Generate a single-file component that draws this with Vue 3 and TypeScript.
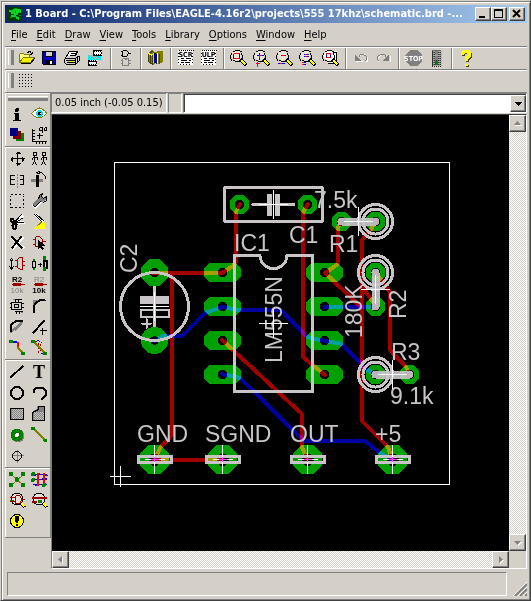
<script setup lang="ts">
import { h, type FunctionalComponent } from 'vue'

interface Shape {
  kind: 'line' | 'fill' | 'text'
  d: string
  color: string
  width?: number
  x?: number
  y?: number
  size?: number
  family?: string
  weight?: number
}
interface Tool {
  name: string
  art: Shape[]
  disabled?: boolean
}

const K = '#000000'
const G = '#808080'
const R = '#990000'
const GR = '#008000'
const OL = '#808000'
const Y = '#ffff00'
const W = '#ffffff'
const N = '#000080'

const L = (d: string, color = K, width = 1): Shape => ({ kind: 'line', d, color, width })
const F = (d: string, color = K): Shape => ({ kind: 'fill', d, color })
const T = (d: string, x: number, y: number, size: number, color = K, family = 'Liberation Sans', weight = 700): Shape =>
  ({ kind: 'text', d, x, y, size, color, family, weight })
const disc = (x: number, y: number, r: number): string =>
  `M${x - r} ${y}a${r} ${r} 0 1 0 ${2 * r} 0a${r} ${r} 0 1 0 ${-2 * r} 0z`

const Glyph: FunctionalComponent<{ art: Shape[]; w: number }> = (props) =>
  h(
    'svg',
    { width: props.w, height: 21, viewBox: `0 0 ${props.w} 21`, 'shape-rendering': 'crispEdges', 'aria-hidden': 'true' },
    props.art.map((s) =>
      s.kind === 'text'
        ? h('text', { x: s.x, y: s.y, 'font-size': s.size, 'font-family': s.family, 'font-weight': s.weight, fill: s.color, 'text-anchor': 'middle' }, s.d)
        : s.kind === 'line'
          ? h('path', { d: s.d, fill: 'none', stroke: s.color, 'stroke-width': s.width, transform: 'translate(.5 .5)' })
          : h('path', { d: s.d, fill: s.color }),
    ),
  )
Glyph.props = ['art', 'w']

const lens = (fill = '#e8e4dc'): Shape[] => [
  F(disc(9.5, 7.5, 5), fill),
  L('M7 2H12M5 3H7M12 3H14M4 4V6M14 4V6M3 6V10M15 6V10M4 10V12M14 10V12M5 12H7M12 12H14M7 13H12'),
  L('M13 11L19 17', K, 4),
  L('M14 12L18 16', Y, 2),
]
const script = (label: string): Shape[] => [
  F('M4 2H19V17H4z', W),
  L('M4 2h1M6 2h1M8 2h1M10 2h1M12 2h1M14 2h1M16 2h1M18 2h1M4 4v1M4 7v1M4 10v1M4 13v1M18 4v1M18 7v1M18 10v1M18 13v1M5 16h1M8 16h1M11 16h1M14 16h1'),
  T(label, 11.5, 9, 7, K, 'DejaVu Sans Condensed', 700),
  L('M6 10h3M11 10h5M6 12h6M14 12h2M6 14h3M10 14h5'),
]

const topGroups: Tool[][] = [
  [
    { name: 'Open', art: [
      F('M4 15V7L6 5H9L10 7H15V10H19L16 15z', '#ffff80'),
      L('M4 14V6L5 5H8L9 6H14V9M4 14L8 9H19L15 14H4', OL),
      L('M5 15H15L19 10M12 4L14 3L16 4M15 6L17 5V3'),
      F('M8 10H18L15 14H6z', '#f8f000'),
    ] },
    { name: 'Save', art: [F('M4 3H18V17H5L4 16z'), F('M5 4H7V9H15V4H17V16H15V12H7V16H5z', '#0000c8'), F('M8 4H14V8H8z', '#d4d0c8'), F('M12 13H14V16H12z', W)] },
    { name: 'Print', art: [
      F('M8 3H17L14 9H5z', W), L('M8 3H16L13 9M8 3L5 8M9 5H14M8 7H13'),
      F('M3 10L6 8H15L19 7V12L15 16H4L3 14z', '#d4d0c8'),
      L('M3 10L5 8M3 10H14L18 7M3 10V14L5 16H14L18 12V7M14 10V16M4 12H14M16 9V14M5 14H13'),
      F('M9 13H12V14H9z', Y),
    ] },
    { name: 'CAM processor', art: [
      F('M4 7H14V11H9V13H4z', '#00f0f0'), F('M9 8H17V12H9z', '#00e8f0'), L('M6 7L12 11M9 7L15 11', '#e8a090'),
      F('M9 2H18V8H9z'), F('M10 4H17V6H10z', W), L('M10 3h1M12 3h1M14 3h1M16 3h1M10 6h1M12 6h1M14 6h1M16 6h1', W),
      F('M4 12H13V18H4z'), F('M5 14H12V16H5z', W), L('M5 12h1M7 12h1M9 12h1M11 12h1M5 16h1M7 16h1M9 16h1M11 16h1', W),
    ] },
  ],
  [{ name: 'Switch to schematic', art: [
    L('M8 2H12L14 4V5L12 8H8V2M6 3H8M6 7H8M14 5H16'),
    L('M8 10H14V17H8V10M6 12H8M6 15H8M14 12H16M14 15H16M10 11H12', G),
  ] }],
  [{ name: 'Use library', art: [
    F('M4 5L8 2L11 4L14 3L19 3V14L15 16L12 15L9 17L4 14z', OL), F('M10 5L13 6V16L10 15z', '#000090'),
    F('M8 6L10 5V15L8 16z', '#d8d860'), F('M13 5L14 5V15H13z', W), L('M4 5V13L8 16M6 5V13M8 6V16M5 5L9 2M15 5V15', '#404000'), L('M4 5L8 7', Y),
  ] }],
  [{ name: 'Run script', art: script('SCR') }, { name: 'Run ULP', art: script('ULP') }],
  [
    { name: 'Zoom to fit', art: [...lens(), L('M6 5H12M6 10H12', '#ff0020'), L('M6 5V10M12 5V10', '#0000ff')] },
    { name: 'Zoom in', art: [...lens(), L('M6 7H13M9 4V11', '#0000ff'), L('M8 7H11M9 6V9M5 15H9M7 13V18', '#ff0020')] },
    { name: 'Zoom out', art: [...lens(), L('M7 7H12', '#0000ff'), L('M8 7H11', '#ff0020'), L('M4 15H11', '#0000ff'), L('M6 15H8', '#ff0020')] },
    { name: 'Redraw', art: [...lens(), L('M7 6H12M7 8H12', '#0000ff'), L('M8 6H10M8 8H10M5 14H9M5 16H9', '#ff0020'), L('M7 14H9M7 16H9', '#0000ff')] },
    { name: 'Zoom select', art: [F('M8 3H18V15H8z', W), L('M13 4H17V13M8 15H16'), ...lens(W), L('M7 5H11V9H7z', '#ff0020'), L('M7 6V8M11 6V8', '#0000ff')] },
  ],
  [
    { name: 'Undo', disabled: true, art: [L('M10 7L12 6H15L18 9V12L17 14M7 7V13H13', W), F('M6 6V13H12z', G), L('M9 9L11 6H14L17 8V11L15 13', G)] },
    { name: 'Redo', disabled: true, art: [L('M7 14L5 11L8 7M18 7V13', W), F('M17 6V13H11z', G), L('M14 9L12 6H8L5 8V11L7 13', G)] },
  ],
  [
    { name: 'Stop', disabled: true, art: [F('M8 2H15L20 7V13L15 18H8L3 13V7z', G), T('STOP', 11.5, 13, 7, W, 'DejaVu Sans Condensed')] },
    { name: 'Go', disabled: true, art: [
      F('M7 2H16V18H7z', '#686868'), L('M7 2V18M9 2V18M11 2V18M13 2V18M15 2V18', '#303030'),
      L('M7 3h9M7 5h9M7 7h9M7 9h9M7 11h9M7 13h9M7 15h9M7 17h9', '#a8a8a8'), F(disc(11.5, 5, 2), G), F(disc(11.5, 10, 2), G), F(disc(11.5, 15, 2), GR),
    ] },
  ],
  [{ name: 'Help', art: [
    L('M8 7V5L10 4H13L15 6V8L12 11V13M12 16V18', '#404000', 3), L('M7 6V5L9 3H12L14 5V7L11 10V12M11 15V17', Y, 3),
  ] }],
]

const sections: Tool[][] = [
  [
    { name: 'Info', art: [F(disc(11, 7, 2)), F('M8 10H13V17H15V18H7V17H9V11H8z')] },
    { name: 'Show', art: [
      F('M3 10L7 7L11 5L15 7L19 10L15 13L11 15L7 13z', W), L('M3 10L5 8L9 5H13L17 8L18 10L15 13L12 14H9L6 13L3 10', OL),
      L('M7 5V6M11 3V5M15 5V6', OL), F(disc(11.5, 10.5, 3.4), '#00e0f0'), F('M10 9H13V12H10z'), L('M11 10h1', W),
    ] },
    { name: 'Display', art: [F('M10 9H18V17H10z', GR), F('M7 7H15V15H7z', '#800000'), F('M4 4H12V12H4z', N)] },
    { name: 'Mark', art: [
      L('M4 4V17H18M3 6h3M3 9h3M3 12h3M3 15h3M8 16v3M11 16v3M14 16v3M17 16v3M8 11H14M11 8V14'),
      L('M11 3V6M11 3H14V6M14 6H11M16 3H18V6H16V3M14 3V8'),
    ] },
  ],
  [
    { name: 'Move', art: [L('M4 10H18M11 3V17M9 5H14M10 4H13M9 15H14M10 16H13M6 8V13M5 9V12M16 8V13M17 9V12')] },
    { name: 'Copy', art: [
      L('M5 4H8V7H5zM4 9H9M6 7V13M4 17L6 12L8 17M4 9V11M9 9V11'), L('M14 4H17V7H14zM13 9H18M15 7V13M13 17L15 12L17 17M13 9V11M18 9V11'),
    ] },
    { name: 'Mirror', art: [L('M8 6H4V15H8M4 10H8M13 6H17V15H13M17 10H13'), L('M11 4v2M11 7v2M11 10v2M11 13v2M11 16v2', G)] },
    { name: 'Rotate', art: [F('M3 10H15V13H3z', G), F('M8 6H11V18H8z'), L('M8 3L11 2L14 4L17 7V9M11 1V4M8 3L11 5')] },
    { name: 'Group', art: [L('M4 4h2M8 4h2M12 4h2M16 4h1M4 17h2M8 17h2M12 17h2M16 17h1M4 5v1M4 8v2M4 12v2M4 16v1M17 5v1M17 8v2M17 12v2M17 16v1')] },
    { name: 'Change', art: [L('M5 17L12 10', W, 5), L('M5 16L12 9', K, 4), L('M5 15L12 8', G, 3), F('M10 9L11 5L14 3L13 7L15 8L18 6V10L14 12z', G), L('M10 9L11 5L14 3L13 6L15 8L18 6V10L15 12')] },
    { name: 'Cut', art: [
      L('M10 10L17 4M9 12L18 11', W, 3), L('M7 12L15 3M8 12L17 6', K), L('M4 10L18 11M8 11H17', K),
      L('M4 7H6L8 10H5L4 8zM7 12L10 13L9 17H7L6 14z', K, 2),
    ] },
    { name: 'Paste', art: [L('M7 3L15 11', W, 3), L('M6 3L14 11M8 3L16 10'), F('M12 10L17 12V15L18 18H6L8 15L10 14z', Y), L('M9 14L14 10', OL)] },
    { name: 'Delete', art: [L('M5 5L18 16M17 5L6 17', W, 2), L('M5 4L16 16M15 4L5 16', K, 2)] },
    { name: 'Add', art: [L('M7 4H11L14 7V10L11 14H7V4M4 7H7M4 12H7M14 9H17', R), F('M10 8V17L12 15L14 18L16 17L14 14H17z'), L('M10 8L17 14', K)] },
    { name: 'Pinswap', art: [L('M5 6V15M3 8L5 5L7 8M3 13L5 16L7 13'), L('M16 4H13L11 6V14L14 16H16M16 4V16M8 7H11M8 13H11M16 8H18M16 12H18', R)] },
    { name: 'Gateswap', art: [L('M4 8H7V14H4zM9 11H13M12 9V13'), F('M5 6H7V8H5zM5 15H7V17H5z', GR), L('M15 7H18V14H15z', K, 2), F(disc(16.5, 5, 2), GR), F(disc(16.5, 16, 2), GR)] },
    { name: 'Name', art: [T('R2', 11, 8, 8), L('M5 10H18', R), F('M7 9H15V12H7z', R), T('10k', 11, 19, 8, G, 'Liberation Sans', 400)] },
    { name: 'Value', art: [T('R2', 11, 8, 8, G, 'Liberation Sans', 400), L('M5 10H18', R), F('M7 9H15V12H7z', R), T('10k', 11, 19, 8)] },
    { name: 'Smash', art: [L('M5 7H15V14H5zM7 4H15M9 4v3M12 4v3M8 16H16M10 16v2M13 16v2M3 8h2M3 12h2M15 8h2M15 12h2M8 9H12V12H8z'), L('M6 4h2M14 17h2', G)] },
    { name: 'Miter', art: [F('M5 5H12L5 12z', G), L('M5 17V11L7 8L11 5L17 4', K, 2)] },
    { name: 'Split', art: [L('M4 16L16 5', G, 2), L('M4 16L5 8L9 5L17 4', K, 2), F('M8 14L16 6V9L9 15z', G)] },
    { name: 'Optimize', art: [L('M4 17L16 4', K, 2), L('M11 14H18M14 11V18')] },
    { name: 'Route', art: [L('M5 4H10', '#0000ff', 2), L('M11 4V10', '#ff0000', 2), L('M11 10L17 16', OL, 2), F(disc(5, 4.5, 2), GR), F(disc(17, 16.5, 2), GR)] },
    { name: 'Ripup', art: [L('M10 5v2M10 9v2M10 13v2M12 6v2M12 11v2M6 4h2M10 4h1', R), L('M12 16h2M12 5h1M8 3h2', '#0000c0'), L('M5 4L17 16', OL, 2), F(disc(5, 4.5, 2), GR), F(disc(17, 16.5, 2), GR)] },
  ],
  [
    { name: 'Wire', art: [L('M4 16L17 4', K, 2)] },
    { name: 'Text', art: [T('T', 11, 17, 18, K, 'Liberation Serif')] },
    { name: 'Circle', art: [L(disc(10.5, 10.5, 6), K, 2)] },
    { name: 'Arc', art: [L('M5 10V8L8 5H14L17 8V13L14 16H12', K, 2)] },
    { name: 'Rectangle', art: [F('M4 5H18V17H4z', G), ...[6, 8, 10, 12, 14].map((y) => L(`M5 ${y}h1m1 0h1m1 0h1m1 0h1m1 0h1m1 0h1M6 ${y + 1}h1m1 0h1m1 0h1m1 0h1m1 0h1`, '#c8c8c0')), L('M4 5H17V16H4z')] },
    { name: 'Polygon', art: [F('M4 18V9L9 6V3H17V18z', G), ...[9, 11, 13, 15].map((y) => L(`M5 ${y}h1m1 0h1m1 0h1m1 0h1m1 0h1m1 0h1M6 ${y + 1}h1m1 0h1m1 0h1m1 0h1m1 0h1`, '#c8c8c0')), L('M4 17V9L10 6V3H16V17z')] },
    { name: 'Via', art: [F(disc(12, 12, 6.5), G), F(disc(11, 11, 6.5), GR), F(disc(11, 11, 2), W)] },
    { name: 'Signal', art: [L('M5 4L17 16', OL, 2), F(disc(5, 4.5, 2), GR), F(disc(17.5, 16.5, 2), GR)] },
    { name: 'Hole', art: [L('M5 10H17M11 4V17', G), L('M9 6H12L15 9V12L12 15H9L6 12V9z')] },
  ],
  [
    { name: 'Ratsnest', art: [L('M5 5L17 16M17 5L5 16', OL), ...([[5, 5], [17, 5], [5, 16], [17, 16], [11, 10.5]] as number[][]).map((p) => F(disc(p[0], p[1], 2.2), GR))] },
    { name: 'Autoroute', art: [L('M5 5H18M4 10H18M4 15H18', '#0000d0'), L('M4 6h3M8 4h3M14 6h5M6 16h3M13 9h5', '#0000ff'), L('M9 3V16M15 3V16', '#ff0000', 2), ...([[5, 5], [5, 11], [16, 16]] as number[][]).map((p) => F(disc(p[0], p[1], 2), GR))] },
    { name: 'ERC', art: [F(disc(11, 9, 6), '#e8e0d8'), L(disc(10.5, 8.5, 6)), L('M9 5H13L15 8V10L13 13H9V5M3 7H9M3 11H9M15 9H18', R), L('M3 10H7', GR), L('M15 13L18 17', K, 3), L('M15 13L18 16', Y, 2)] },
    { name: 'DRC', art: [F(disc(11, 9, 6), '#e8e0d8'), L(disc(10.5, 8.5, 6)), L('M3 7H18', R, 2), L('M3 11H8', R, 2), F(disc(12, 11.5, 2), GR), L('M15 13L18 17', K, 3), L('M15 13L18 16', Y, 2)] },
    { name: 'Errors', art: [F(disc(11, 10, 7)), F(disc(11, 10, 6), Y), F('M9 5H13V9L12 12H10L9 9zM10 13H12V15H10z')] },
  ],
]

const menus = ['File', 'Edit', 'Draw', 'View', 'Tools', 'Library', 'Options', 'Window', 'Help']

// Octagon of half-width a and half-height b, corners cut at 45 degrees, drilled in the middle
const pad = (x: number, y: number, a: number, b: number, drill: number): string => {
  const c = b * 0.6
  const e = drill * 0.45
  return (
    `M${x - a} ${y - b + c}L${x - a + c} ${y - b}H${x + a - c}L${x + a} ${y - b + c}V${y + b - c}L${x + a - c} ${y + b}H${x - a + c}L${x - a} ${y + b - c}z` +
    `M${x - drill} ${y - e}V${y + e}L${x - e} ${y + drill}H${x + e}L${x + drill} ${y + e}V${y - e}L${x + e} ${y - drill}H${x - e}z`
  )
}
const pads: string[] = [
  ...[272.5, 306.5, 340.5, 374.5].flatMap((y) => [pad(222.5, y, 18.5, 9.5, 4.5), pad(324.5, y, 18.5, 9.5, 4.5)]),
  pad(239.5, 204.5, 9.5, 9.5, 4.5),
  pad(307.5, 204.5, 9.5, 9.5, 4.5),
  pad(341.5, 221.5, 9.5, 9.5, 4.5),
  pad(375.5, 221.5, 9.5, 9.5, 4.5),
  pad(375.5, 272.5, 9.5, 9.5, 4.5),
  pad(375.5, 306.5, 9.5, 9.5, 4.5),
  pad(375.5, 374.5, 9.5, 9.5, 4.5),
  pad(409.5, 374.5, 9.5, 9.5, 4.5),
  pad(154.5, 272.5, 13.5, 13.5, 4.5),
  disc(154.5, 340.5, 13.5) + disc(154.5, 340.5, 4.5),
  ...[154.5, 222.5, 307.5, 392.5].map((x) => pad(x, 459.5, 14.5, 14.5, 6)),
]
const topCopper = [
  'M154 273H222L233 266L236 262V212L240 204',
  'M172 273V435L160 448L155 459',
  'M154 460H222',
  'M308 204L303 212V357L325 375',
  'M222 340L302 414V447L307 459',
  'M341 221L338 228V264L325 273L362 308',
  'M376 221L370 231L362 240V421L388 447L392 459',
  'M362 287L376 306',
  'M376 273L390 292V350L406 367L410 375',
]
const bottomCopper = [
  'M155 341L163 336H182L205 313L222 307L238 310H281L307 337L325 341L342 344L366 369L376 375',
  'M222 374L240 378L304 441H365L380 453L392 460',
  'M325 307H376',
]
const terminals = [154.5, 222.5, 307.5, 392.5]
const rings = [[375.5, 221.5], [375.5, 272.5], [375.5, 374.5]]
const labels = [
  { t: 'IC1', x: 234, y: 251 },
  { t: 'C1', x: 289, y: 243 },
  { t: '7.5k', x: 314, y: 208 },
  { t: 'R1', x: 329, y: 252 },
  { t: 'R3', x: 391, y: 360 },
  { t: '9.1k', x: 390, y: 404 },
  { t: 'GND', x: 137, y: 442 },
  { t: 'SGND', x: 205, y: 442 },
  { t: 'OUT', x: 290, y: 442 },
  { t: '+5', x: 375, y: 442 },
]
const uprightLabels = [
  { t: 'C2', x: 137, y: 273 },
  { t: 'LM555N', x: 282, y: 363 },
  { t: '180K', x: 362, y: 338 },
  { t: 'R2', x: 406, y: 319 },
]
</script>

<template>
  <div class="window">
    <header class="title">
      <svg class="logo" width="14" height="14" viewBox="0 0 14 14" shape-rendering="crispEdges" aria-hidden="true">
        <path d="M0 0H14V14H0z" fill="#003800" />
        <path d="M1 4H4V6H6V3H12V5H9V7H7V9H3M8 10L11 12" fill="none" stroke="#00d820" stroke-width="2" />
        <path d="M2 10h2M6 1h3M11 8h2" stroke="#00a000" />
      </svg>
      <h1>1 Board - C:\Program Files\EAGLE-4.16r2\projects\555 17khz\schematic.brd -...</h1>
      <div class="captions">
        <button type="button" class="raised" aria-label="Minimize"><svg width="12" height="10"><path d="M2 7H8V9H2z" /></svg></button>
        <button type="button" class="raised" aria-label="Maximize"><svg width="12" height="10"><path d="M1 0H10V9H1zM2 2V8H9V2z" fill-rule="evenodd" /></svg></button>
        <button type="button" class="raised close" aria-label="Close"><svg width="12" height="10"><path d="M2 1L9 8M9 1L2 8" stroke="#000" stroke-width="2" /></svg></button>
      </div>
    </header>

    <nav class="menu">
      <a v-for="m in menus" :key="m" href="#"><u>{{ m[0] }}</u>{{ m.slice(1) }}</a>
    </nav>

    <div class="toolbar">
      <div v-for="(g, i) in topGroups" :key="i" class="group">
        <span v-if="i === 0" class="grip"></span>
        <button v-for="t in g" :key="t.name" type="button" class="tool" :aria-label="t.name" :disabled="t.disabled">
          <Glyph :art="t.art" :w="23" />
        </button>
      </div>
    </div>

    <div class="toolbar params">
      <div class="group">
        <span class="grip"></span>
        <button type="button" class="tool" aria-label="Grid">
          <svg width="23" height="21" viewBox="0 0 23 21" shape-rendering="crispEdges">
            <path v-for="y in [3, 6, 9, 12, 15]" :key="y" :d="`M4 ${y}.5H18`" stroke="#000" stroke-dasharray="1 2" />
          </svg>
        </button>
      </div>
    </div>

    <div class="work">
      <aside class="side">
        <section v-for="(s, i) in sections" :key="i">
          <span v-if="i === 0" class="grip flat"></span>
          <div class="cells">
            <button v-for="t in s" :key="t.name" type="button" class="tool" :aria-label="t.name">
              <Glyph :art="t.art" :w="22" />
            </button>
          </div>
        </section>
      </aside>

      <main class="editor">
        <div class="command">
          <output class="coords">0.05 inch (-0.05 0.15)</output>
          <span class="mark"></span>
          <div class="combo">
            <input type="text" aria-label="Command" />
            <button type="button" class="raised" aria-label="Command history"><svg width="11" height="13" shape-rendering="crispEdges"><path d="M2 5H9L5.500 9z" /></svg></button>
          </div>
        </div>

        <div class="view">
          <div class="canvas">
            <svg width="457" height="436" viewBox="52 115 457 436" role="img" aria-label="Board layout">
              <g class="copper" shape-rendering="crispEdges">
                <path v-for="(d, i) in topCopper" :key="'t' + i" :d="d" class="trace red" />
                <path v-for="(d, i) in bottomCopper" :key="'b' + i" :d="d" class="trace blue" />
                <path v-for="(d, i) in pads" :key="'p' + i" :d="d" class="pad" />
              </g>
              <g class="silk" shape-rendering="crispEdges">
                <rect x="224.500" y="187.500" width="98" height="34" rx="1" />
                <path d="M253 204.500H267M280 204.500H294" />
                <path d="M269.500 194V216M277.500 194V216" class="plate" />
                <path d="M260 255.500H234.500V391.500H312.500V255.500H287C286 273 261 273 260 255.500" />
                <circle cx="154.500" cy="306.500" r="34" />
                <path d="M154.500 287V326" />
                <path d="M142 323.500H151M146.500 319V328" class="thin" />
                <path d="M140 300H169" class="slab" />
                <rect x="140.500" y="310" width="28" height="7" class="thin" />
                <g v-for="(r, i) in rings" :key="i">
                  <circle :cx="r[0]" :cy="r[1]" r="17" />
                  <circle :cx="r[0]" :cy="r[1]" r="12.500" />
                </g>
                <path d="M341.500 221.500H375.500" class="lead" />
                <path d="M375.500 272.500V306.500" class="lead" />
                <path d="M375.500 374.500H409.500" class="lead" />
                <g v-for="x in terminals" :key="x">
                  <rect :x="x - 16.5" y="456.500" width="33" height="6" />
                </g>
              </g>
              <g class="names">
                <text v-for="l in labels" :key="l.t" :x="l.x" :y="l.y">{{ l.t }}</text>
                <text v-for="l in uprightLabels" :key="l.t" :transform="`translate(${l.x} ${l.y}) rotate(-90)`">{{ l.t }}</text>
              </g>
              <g class="hair" shape-rendering="crispEdges">
                <rect x="114.500" y="162.500" width="335" height="322" />
                <path d="M110 476.500H131M120.500 466V487" />
                <path d="M259 204.500H288M273.500 190V219" />
                <path d="M259 323.500H288M273.500 309V338" />
                <path d="M140 306.500H169M154.500 292V321" />
                <path d="M344 221.500H373M358.500 207V236" />
                <path d="M361 289.500H390M375.500 275V304" />
                <path d="M378 374.500H407M392.500 360V389" />
                <path v-for="x in terminals" :key="x" :d="`M${x - 10} 459.5H${x + 10}M${x} 445V474`" />
                <path v-for="x in terminals" :key="'m' + x" :d="`M${x - 4} 459.5H${x + 4}M${x} 457V462`" class="center" />
              </g>
            </svg>
          </div>
          <div class="scroll vertical">
            <button type="button" class="raised" aria-label="Scroll up"><svg width="13" height="13"><path d="M4 9H11L7.500 5z" fill="#fff" /><path d="M3 8H10L6.500 4z" fill="#808080" /></svg></button>
            <button type="button" class="raised" aria-label="Scroll down"><svg width="13" height="13"><path d="M4 6H11L7.500 10z" fill="#fff" /><path d="M3 5H10L6.500 9z" fill="#808080" /></svg></button>
          </div>
          <div class="scroll horizontal">
            <button type="button" class="raised" aria-label="Scroll left"><svg width="13" height="13"><path d="M9 4V11L5 7.500z" fill="#fff" /><path d="M8 3V10L4 6.500z" fill="#808080" /></svg></button>
            <button type="button" class="raised" aria-label="Scroll right"><svg width="13" height="13"><path d="M6 4V11L10 7.500z" fill="#fff" /><path d="M5 3V10L9 6.500z" fill="#808080" /></svg></button>
          </div>
          <div class="corner"></div>
        </div>
      </main>
    </div>

    <footer class="status">
      <div class="message"></div>
      <svg width="16" height="16" viewBox="0 0 16 16" aria-hidden="true">
        <path d="M2 16L16 2M7 16L16 7M12 16L16 12" stroke="#fff" />
        <path d="M4 16L16 4M9 16L16 9M14 16L16 14" stroke="#808080" stroke-width="2" />
      </svg>
    </footer>
  </div>
</template>

<style>
html,
body {
  margin: 0;
  background: #d4d0c8;
}
</style>

<style scoped>
.window {
  box-sizing: border-box;
  display: flex;
  flex-direction: column;
  min-height: 100vh;
  padding: 2px 3px 3px 2px;
  background: #d4d0c8;
  border: 1px solid #d4d0c8;
  border-right-color: #404040;
  border-bottom-color: #404040;
  box-shadow: inset 1px 1px #808080, inset 2px 2px #fff, inset -1px -1px #808080;
  font: 11px/14px "DejaVu Sans Condensed", "DejaVu Sans", sans-serif;
  color: #000;
}
button {
  padding: 0;
  border: 0;
  background: #d4d0c8;
  display: block;
}
svg {
  display: block;
}
.raised {
  flex: none;
  display: flex;
  align-items: center;
  justify-content: center;
  border: 1px solid;
  border-color: #fff #404040 #404040 #fff;
  box-shadow: inset -1px -1px #808080;
}
.title {
  display: flex;
  align-items: center;
  height: 18px;
  margin: 2px 0 0 2px;
  padding: 0 2px 0 3px;
  background: linear-gradient(90deg, #0a246a, #a6caf0);
}
.logo {
  flex: none;
}
.title h1 {
  flex: 1;
  min-width: 0;
  margin: 0;
  padding-left: 3px;
  overflow: hidden;
  white-space: nowrap;
  font-size: 11px;
  line-height: 18px;
  font-weight: 700;
  color: #fff;
}
.captions {
  display: flex;
}
.captions .raised {
  width: 16px;
  height: 14px;
}
.captions .close {
  margin-left: 2px;
}
.menu {
  display: flex;
  height: 23px;
  align-items: center;
  padding-left: 4px;
}
.menu a {
  padding: 0 5px 0 4px;
  color: #000;
  text-decoration: none;
}
.menu u {
  text-underline-offset: 2px;
}
.toolbar {
  display: flex;
  height: 21px;
  margin-left: 2px;
  border-top: 1px solid #808080;
  box-shadow: inset 0 1px #fff;
  padding-top: 1px;
}
.group {
  display: flex;
  padding: 0 3px 0 2px;
  border-left: 1px solid #fff;
  border-right: 1px solid #808080;
}
.group:last-child {
  border-right: 0;
}
.grip {
  width: 2px;
  height: 15px;
  margin: 2px 3px 0 0;
  border-left: 1px solid #fff;
  border-right: 1px solid #808080;
  box-shadow: 2px 0 #808080, 1px 0 #fff;
  flex: none;
}
.grip.flat {
  display: block;
  width: auto;
  height: 1px;
  margin: 2px 2px 4px;
  border: 1px solid #fff;
  border-bottom-color: #808080;
  border-width: 1px 0;
  box-shadow: 0 2px #808080, 0 1px #fff;
}
.tool {
  flex: none;
}
.work {
  flex: 1;
  display: flex;
  min-height: 0;
  margin-left: 2px;
  border-top: 1px solid #808080;
}
.side {
  flex: none;
  align-self: flex-start;
  width: 45px;
  border-right: 1px solid #808080;
  border-bottom: 1px solid #808080;
}
.side section {
  border-top: 1px solid #fff;
  border-left: 1px solid #fff;
  padding-bottom: 1px;
}
.side section + section {
  box-shadow: 0 -1px #808080;
  margin-top: 1px;
}
.side section:last-child {
  padding-bottom: 5px;
}
.cells {
  display: grid;
  grid-template-columns: repeat(2, 22px);
}
.editor {
  flex: 1;
  min-width: 0;
  display: flex;
  flex-direction: column;
}
.command {
  display: flex;
  gap: 1px;
  height: 20px;
  padding-bottom: 1px;
}
.coords,
.mark,
.combo {
  box-sizing: border-box;
  border: 1px solid;
  border-color: #808080 #fff #fff #808080;
}
.coords {
  width: 116px;
  padding: 2px 0 0 3px;
  white-space: nowrap;
}
.mark {
  width: 14px;
}
.combo {
  flex: 1;
  display: flex;
  min-width: 0;
  background: #fff;
  box-shadow: inset 1px 1px #404040;
}
.combo input {
  flex: 1;
  min-width: 0;
  margin: 2px;
  padding: 0 2px;
  border: 0;
  outline: 0;
  font: inherit;
}
.combo .raised {
  width: 16px;
  margin-top: 1px;
}
.view {
  flex: 1;
  display: grid;
  grid-template-columns: minmax(0, 1fr) 17px;
  grid-template-rows: 1fr 17px;
  border: 1px solid;
  border-color: #404040 #fff #fff #808080;
  box-shadow: inset 1px 0 #404040;
}
.canvas {
  overflow: hidden;
  background: #000;
}
.scroll {
  display: flex;
  justify-content: space-between;
  background: repeating-conic-gradient(#fff 0 25%, #d4d0c8 0 50%) 0 0 / 2px 2px;
}
.scroll .raised {
  width: 17px;
  height: 17px;
}
.vertical {
  flex-direction: column;
}
.status {
  display: flex;
  align-items: flex-end;
  justify-content: space-between;
  gap: 4px;
  padding: 3px 0 1px 4px;
}
.message {
  flex: 1;
  height: 22px;
  border: 1px solid;
  border-color: #808080 #fff #fff #808080;
}
.copper {
  isolation: isolate;
}
.copper path {
  mix-blend-mode: lighten;
}
.trace {
  fill: none;
  stroke-width: 4px;
  stroke-linecap: round;
  stroke-linejoin: round;
}
.red {
  stroke: #a00000;
}
.blue {
  stroke: #0000a0;
}
.pad {
  fill: #00a000;
  fill-rule: evenodd;
}
.silk {
  fill: none;
  stroke: #c8c4c8;
  stroke-width: 3px;
  stroke-linecap: round;
}
.silk .plate {
  stroke-width: 5px;
  stroke-linecap: butt;
}
.silk .slab {
  stroke-width: 8px;
  stroke-linecap: butt;
}
.silk .thin {
  stroke-width: 2px;
}
.silk .lead {
  stroke-width: 8px;
  stroke-opacity: 0.92;
}
.names {
  fill: #c8c4c8;
  font: 23px "Liberation Sans", Arial, sans-serif;
}
.hair {
  fill: none;
  stroke: #fff;
  stroke-width: 1px;
}
.hair .center {
  stroke: #ff40ff;
}
</style>
